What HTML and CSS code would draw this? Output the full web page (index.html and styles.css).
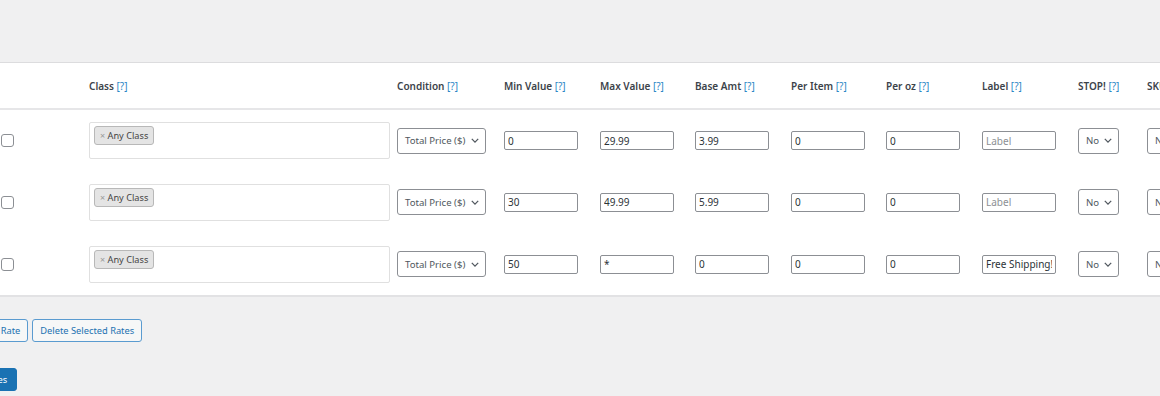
FILE: index.html
```html
<!DOCTYPE html>
<html lang="en">
<head>
  <meta charset="UTF-8" />
  <title>Table Rate Shipping</title>
  <link rel="stylesheet" href="styles.css">
</head>
<body>

<div class="wrap">
  <div class="rates">
    <table class="rates-table">
      <colgroup>
        <col class="c-check">
        <col class="c-class">
        <col class="c-cond">
        <col class="c-num">
        <col class="c-num2">
        <col class="c-num">
        <col class="c-num2">
        <col class="c-num">
        <col class="c-num">
        <col class="c-stop">
        <col class="c-sku">
      </colgroup>
      <thead>
        <tr>
          <th></th>
          <th>Class <a class="tip" href="#">[?]</a></th>
          <th>Condition <a class="tip" href="#">[?]</a></th>
          <th>Min Value <a class="tip" href="#">[?]</a></th>
          <th>Max Value <a class="tip" href="#">[?]</a></th>
          <th>Base Amt <a class="tip" href="#">[?]</a></th>
          <th>Per Item <a class="tip" href="#">[?]</a></th>
          <th>Per oz <a class="tip" href="#">[?]</a></th>
          <th>Label <a class="tip" href="#">[?]</a></th>
          <th>STOP! <a class="tip" href="#">[?]</a></th>
          <th>SKU <a class="tip" href="#">[?]</a></th>
        </tr>
      </thead>
      <tbody>
        <tr>
          <td><input type="checkbox" class="check"></td>
          <td><div class="multi"><span class="tag"><span class="tag-x">×</span> Any Class</span></div></td>
          <td><div class="select cond"><span>Total Price ($)</span><svg class="chev" viewBox="0 0 10 6"><path d="M1 1l4 4 4-4" /></svg></div></td>
          <td><input type="text" class="field" value="0"></td>
          <td><input type="text" class="field" value="29.99"></td>
          <td><input type="text" class="field" value="3.99"></td>
          <td><input type="text" class="field" value="0"></td>
          <td><input type="text" class="field" value="0"></td>
          <td><input type="text" class="field" placeholder="Label"></td>
          <td><div class="select small"><span>No</span><svg class="chev" viewBox="0 0 10 6"><path d="M1 1l4 4 4-4" /></svg></div></td>
          <td><div class="select small"><span>No</span><svg class="chev" viewBox="0 0 10 6"><path d="M1 1l4 4 4-4" /></svg></div></td>
        </tr>
        <tr>
          <td><input type="checkbox" class="check"></td>
          <td><div class="multi"><span class="tag"><span class="tag-x">×</span> Any Class</span></div></td>
          <td><div class="select cond"><span>Total Price ($)</span><svg class="chev" viewBox="0 0 10 6"><path d="M1 1l4 4 4-4" /></svg></div></td>
          <td><input type="text" class="field" value="30"></td>
          <td><input type="text" class="field" value="49.99"></td>
          <td><input type="text" class="field" value="5.99"></td>
          <td><input type="text" class="field" value="0"></td>
          <td><input type="text" class="field" value="0"></td>
          <td><input type="text" class="field" placeholder="Label"></td>
          <td><div class="select small"><span>No</span><svg class="chev" viewBox="0 0 10 6"><path d="M1 1l4 4 4-4" /></svg></div></td>
          <td><div class="select small"><span>No</span><svg class="chev" viewBox="0 0 10 6"><path d="M1 1l4 4 4-4" /></svg></div></td>
        </tr>
        <tr>
          <td><input type="checkbox" class="check"></td>
          <td><div class="multi"><span class="tag"><span class="tag-x">×</span> Any Class</span></div></td>
          <td><div class="select cond"><span>Total Price ($)</span><svg class="chev" viewBox="0 0 10 6"><path d="M1 1l4 4 4-4" /></svg></div></td>
          <td><input type="text" class="field" value="50"></td>
          <td><input type="text" class="field" value="*"></td>
          <td><input type="text" class="field" value="0"></td>
          <td><input type="text" class="field" value="0"></td>
          <td><input type="text" class="field" value="0"></td>
          <td><input type="text" class="field" value="Free Shipping!"></td>
          <td><div class="select small"><span>No</span><svg class="chev" viewBox="0 0 10 6"><path d="M1 1l4 4 4-4" /></svg></div></td>
          <td><div class="select small"><span>No</span><svg class="chev" viewBox="0 0 10 6"><path d="M1 1l4 4 4-4" /></svg></div></td>
        </tr>
      </tbody>
    </table>
  </div>

  <div class="actions">
    <button class="btn">Add New Rate</button>
    <button class="btn">Delete Selected Rates</button>
  </div>

  <div class="submit">
    <button class="btn-primary">Save changes</button>
  </div>
</div>

</body>
</html>
```

FILE: styles.css
```css
body {
  margin: 0;
  background: #f0f0f1;
  font-family: 'Noto Sans', 'Open Sans', sans-serif;
  font-size: 10px;
  color: #3c434a;
  overflow: hidden;
}
.wrap {
  padding-top: 62px;
}
.rates {
  background: #fff;
  border-top: 1px solid #dcdcde;
  border-bottom: 2px solid #e2e2e4;
  width: 1300px;
}
.rates-table {
  border-collapse: collapse;
  table-layout: fixed;
  width: 1247px;
}
.c-check { width: 89px; }
.c-class { width: 308px; }
.c-cond { width: 107px; }
.c-num { width: 96px; }
.c-num2 { width: 95px; }
.c-stop { width: 69px; }
.c-sku { width: 100px; }
th, td {
  padding: 0;
  text-align: left;
  vertical-align: middle;
}
thead tr {
  height: 46px;
  border-bottom: 2px solid #e6e6e8;
}
th {
  font-weight: 600;
  color: #3c434a;
  white-space: nowrap;
}
.tip {
  color: #2b86c5;
  text-decoration: none;
  font-weight: 400;
}
tbody tr {
  height: 62px;
}
.check {
  appearance: none;
  width: 13px;
  height: 13px;
  margin: 0 0 0 1px;
  border: 1px solid #8c8f94;
  border-radius: 3px;
  background: #fff;
  display: block;
}
.multi {
  box-sizing: border-box;
  width: 301px;
  height: 37px;
  border: 1px solid #e0e0e0;
  border-radius: 2px;
  padding: 3px 4px;
  background: #fff;
}
.tag {
  display: inline-block;
  box-sizing: border-box;
  height: 19px;
  line-height: 17px;
  padding: 0 5px 0 5px;
  background: #e4e4e4;
  border: 1px solid #b8b8b8;
  border-radius: 3px;
  color: #444;
  font-size: 9.2px;
}
.tag-x {
  color: #999;
  font-size: 9px;
}
.select {
  box-sizing: border-box;
  height: 26px;
  display: flex;
  align-items: center;
  justify-content: space-between;
  border: 1px solid #8c8f94;
  border-radius: 3px;
  background: #fff;
  color: #50575e;
  font-size: 9.6px;
  padding: 0 6px 0 7px;
}
.select.cond { width: 89px; }
.select.small { width: 41px; }
.chev {
  width: 8px;
  height: 5px;
  fill: none;
  stroke: #50575e;
  stroke-width: 1.6;
}
.field {
  box-sizing: border-box;
  width: 74px;
  height: 19px;
  margin: 0;
  padding: 0 3px;
  border: 1px solid #8c8f94;
  border-radius: 2px;
  font-family: inherit;
  font-size: 10px;
  color: #2c3338;
  background: #fff;
}
.field::placeholder {
  color: #8c8f94;
}
.actions {
  display: flex;
  gap: 4px;
  margin: 22px 0 0 -49px;
}
.btn {
  height: 23px;
  padding: 0 7px;
  border: 1px solid #5a9bd0;
  border-radius: 3px;
  background: #f6f7f7;
  color: #2271b1;
  font-family: inherit;
  font-size: 9.3px;
}
.submit {
  margin: 26px 0 0 -62px;
}
.btn-primary {
  height: 23px;
  padding: 0 9px;
  border: 1px solid #1a72b3;
  border-radius: 3px;
  background: #1a72b3;
  color: #fff;
  font-family: inherit;
  font-size: 9.3px;
}
```
